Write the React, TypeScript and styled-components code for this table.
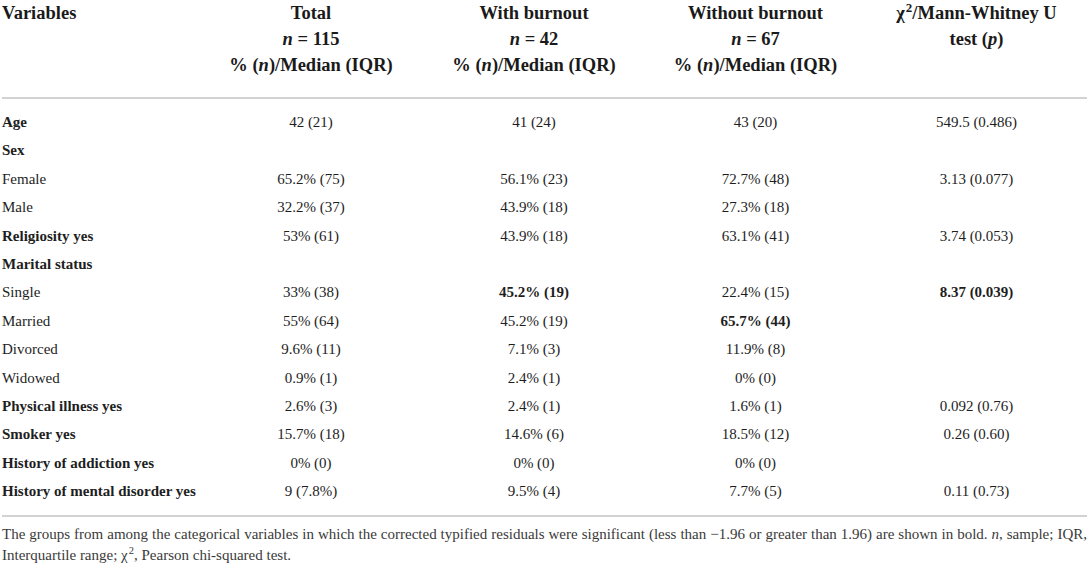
import React from 'react';
import styled, { createGlobalStyle } from 'styled-components';

const GlobalStyle = createGlobalStyle`
  html, body {
    margin: 0;
    padding: 0;
    background: #ffffff;
  }
  body {
    font-family: 'Liberation Serif', 'Times New Roman', serif;
    color: #1e1e1e;
  }
`;

const Page = styled.div`
  padding: 0 2px;
`;

const Table = styled.table`
  width: 100%;
  table-layout: fixed;
  border-collapse: collapse;
  font-size: 15px;
`;

const HeadCell = styled.th<{ align?: 'left' | 'center' }>`
  text-align: ${({ align }) => align || 'center'};
  vertical-align: top;
  font-size: 18.5px;
  font-weight: bold;
  line-height: 26px;
  padding: 0 0 19px;
  border-bottom: 2px solid #d2d2d2;
  color: #1a1a1a;
  white-space: nowrap;
`;

const Cell = styled.td<{ strong?: boolean; align?: 'left' | 'center' }>`
  text-align: ${({ align }) => align || 'center'};
  font-weight: ${({ strong }) => (strong ? 'bold' : 'normal')};
  height: 28.4px;
  padding: 0;
  line-height: 28.4px;
  white-space: nowrap;
`;

const FirstBodyRow = styled.tr`
  td {
    padding-top: 9px;
  }
`;

const LastBodyRow = styled.tr`
  td {
    padding-bottom: 9px;
    border-bottom: 2px solid #d2d2d2;
  }
`;

const Footnote = styled.p`
  margin: 0;
  padding-top: 7px;
  font-size: 15px;
  line-height: 21.5px;
  text-align: justify;
  color: #3a3a3a;
`;

const Sup = styled.sup`
  font-size: 0.7em;
  vertical-align: 0.55em;
  line-height: 0;
  margin-left: 1px;
`;

interface Row {
  label: string;
  strongLabel?: boolean;
  cells: string[];
  strongCells?: number[];
}

const rows: Row[] = [
  { label: 'Age', strongLabel: true, cells: ['42 (21)', '41 (24)', '43 (20)', '549.5 (0.486)'] },
  { label: 'Sex', strongLabel: true, cells: ['', '', '', ''] },
  { label: 'Female', cells: ['65.2% (75)', '56.1% (23)', '72.7% (48)', '3.13 (0.077)'] },
  { label: 'Male', cells: ['32.2% (37)', '43.9% (18)', '27.3% (18)', ''] },
  { label: 'Religiosity yes', strongLabel: true, cells: ['53% (61)', '43.9% (18)', '63.1% (41)', '3.74 (0.053)'] },
  { label: 'Marital status', strongLabel: true, cells: ['', '', '', ''] },
  { label: 'Single', cells: ['33% (38)', '45.2% (19)', '22.4% (15)', '8.37 (0.039)'], strongCells: [1, 3] },
  { label: 'Married', cells: ['55% (64)', '45.2% (19)', '65.7% (44)', ''], strongCells: [2] },
  { label: 'Divorced', cells: ['9.6% (11)', '7.1% (3)', '11.9% (8)', ''] },
  { label: 'Widowed', cells: ['0.9% (1)', '2.4% (1)', '0% (0)', ''] },
  { label: 'Physical illness yes', strongLabel: true, cells: ['2.6% (3)', '2.4% (1)', '1.6% (1)', '0.092 (0.76)'] },
  { label: 'Smoker yes', strongLabel: true, cells: ['15.7% (18)', '14.6% (6)', '18.5% (12)', '0.26 (0.60)'] },
  { label: 'History of addiction yes', strongLabel: true, cells: ['0% (0)', '0% (0)', '0% (0)', ''] },
  { label: 'History of mental disorder yes', strongLabel: true, cells: ['9 (7.8%)', '9.5% (4)', '7.7% (5)', '0.11 (0.73)'] },
];

function GroupHead({ title, n }: { title: string; n: number }) {
  return (
    <HeadCell>
      {title}
      <br />
      <i>n</i> = {n}
      <br />% (<i>n</i>)/Median (IQR)
    </HeadCell>
  );
}

function BodyRow({ row, index }: { row: Row; index: number }) {
  const Tr = index === 0 ? FirstBodyRow : index === rows.length - 1 ? LastBodyRow : 'tr';
  return (
    <Tr>
      <Cell align="left" strong={row.strongLabel}>
        {row.label}
      </Cell>
      {row.cells.map((c, i) => (
        <Cell key={i} strong={row.strongCells?.includes(i)}>
          {c}
        </Cell>
      ))}
    </Tr>
  );
}

export default function App() {
  return (
    <Page>
      <GlobalStyle />
      <Table>
        <colgroup>
          <col style={{ width: 197 }} />
          <col style={{ width: 224 }} />
          <col style={{ width: 222 }} />
          <col style={{ width: 221 }} />
          <col />
        </colgroup>
        <thead>
          <tr>
            <HeadCell align="left">Variables</HeadCell>
            <GroupHead title="Total" n={115} />
            <GroupHead title="With burnout" n={42} />
            <GroupHead title="Without burnout" n={67} />
            <HeadCell>
              χ<Sup>2</Sup>/Mann-Whitney U
              <br />
              test (<i>p</i>)
            </HeadCell>
          </tr>
        </thead>
        <tbody>
          {rows.map((r, i) => (
            <BodyRow key={r.label} row={r} index={i} />
          ))}
        </tbody>
      </Table>
      <Footnote>
        The groups from among the categorical variables in which the corrected typified residuals were
        significant (less than −1.96 or greater than 1.96) are shown in bold. <i>n</i>, sample; IQR,
        Interquartile range; χ<Sup>2</Sup>, Pearson chi-squared test.
      </Footnote>
    </Page>
  );
}
